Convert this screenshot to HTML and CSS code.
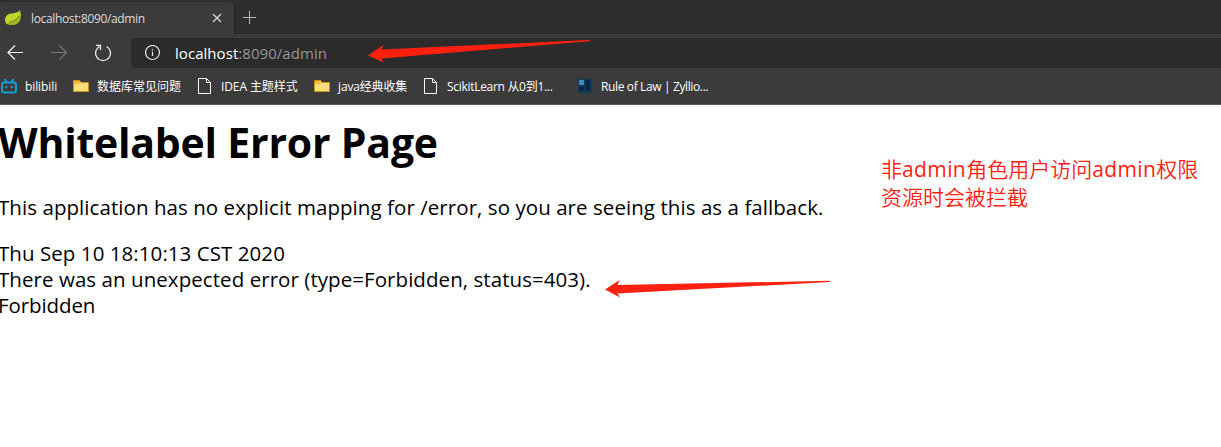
FILE: index.html
```html
<!DOCTYPE html>
<html lang="zh-CN">
<head>
<meta charset="utf-8">
<title>localhost:8090/admin</title>
<link rel="stylesheet" href="styles.css">
</head>
<body>
<header class="browser">
  <div class="tabstrip">
    <div class="tab">
      <svg class="leaf" width="18" height="18" viewBox="0 0 18 18"><path d="M15.800 1.200C17.200 5 17.400 10 14.800 13c-2.600 3-7.300 3.400-11.300 1.800C.2 13.500.4 8.300 3.200 6c3-2.400 9.800-1 12.600-4.800z" fill="#c3d62e"/><path d="M1.300 14c6 .3 11.500-2.300 14.800-8 .2 3-.2 5.800-2 7.700-3 3-7.600 2.800-11 1.600z" fill="#9fba1a"/><path d="M5 13.300c4.500-.8 8-2.800 10.500-6.600" fill="none" stroke="#4d6b18" stroke-width=".8"/></svg>
      <span class="tab-title">localhost:8090/admin</span>
      <svg class="close" width="10" height="10" viewBox="0 0 10 10"><path d="M1 1l8 8M9 1L1 9" stroke="#d8d8d8" stroke-width="1.300"/></svg>
    </div>
    <svg class="plus" width="14" height="14" viewBox="0 0 14 14"><path d="M7.500 1v13M1 7.500h13" stroke="#b4b4b4"/></svg>
  </div>
  <div class="toolbar">
    <svg width="18" height="18" viewBox="0 0 18 18" fill="none" stroke="#f2f2f2" stroke-width="1.200"><path d="M17 8.500H2.300M9 1.500L2 8.500l7 7"/></svg>
    <svg width="18" height="18" viewBox="0 0 18 18" fill="none" stroke="#777" stroke-width="1.200"><path d="M1 8.500h15.200M9.500 1.500l7 7-7 7"/></svg>
    <svg width="18" height="18" viewBox="0 0 18 18" fill="none" stroke="#f2f2f2" stroke-width="1.300"><path d="M12.600 2.500A7.500 7.500 0 1 1 5.500 2.500M2 1.400h4.500v4.700"/></svg>
    <div class="omnibox">
      <svg width="16" height="16" viewBox="0 0 16 16"><circle cx="7.500" cy="7.500" r="7" fill="none" stroke="#e8e8e8" stroke-width="1.200"/><path d="M7.500 6.500V11M7.500 4v1.300" stroke="#e8e8e8" stroke-width="1.200"/></svg>
      <span class="url"><b>localhost</b>:8090/admin</span>
    </div>
  </div>
  <nav class="bookmarks">
    <a class="bm bm-bili"><svg width="17" height="16" viewBox="0 0 17 16" fill="none" stroke="#119fd6" stroke-width="2"><rect x="2" y="4.500" width="14" height="10" rx="2.200"/><path d="M4.500 1l2 2.800M13.500 1l-2 2.800M6.200 8v2.300M11.800 8v2.300"/></svg><span>bilibili</span></a>
    <a class="bm bm-db"><svg width="16" height="12" viewBox="0 0 16 12"><path d="M.5.5h6l1.500 2h7.500v9H.5z" fill="#ffdc7c" stroke="#c79512"/><path d="M1 1h5.500l.5 1.500L6 4H1z" fill="#f5bd2e"/></svg><span>数据库常见问题</span></a>
    <a class="bm bm-idea"><svg width="13" height="16" viewBox="0 0 13 16" fill="none" stroke="#f4f4f4"><path d="M.5.5h8l4 4v11H.5zM8.500.5v4h4"/></svg><span>IDEA 主题样式</span></a>
    <a class="bm bm-java"><svg width="16" height="12" viewBox="0 0 16 12"><path d="M.5.5h6l1.500 2h7.500v9H.5z" fill="#ffdc7c" stroke="#c79512"/><path d="M1 1h5.500l.5 1.500L6 4H1z" fill="#f5bd2e"/></svg><span>java经典收集</span></a>
    <a class="bm bm-sci"><svg width="13" height="16" viewBox="0 0 13 16" fill="none" stroke="#f4f4f4"><path d="M.5.5h8l4 4v11H.5zM8.500.5v4h4"/></svg><span>ScikitLearn 从0到1...</span></a>
    <a class="bm bm-law"><svg width="16" height="16" viewBox="0 0 16 16"><rect x=".5" y=".5" width="15" height="15" rx="2" fill="#1d3a4c" stroke="#27404e"/><path d="M2 2h5v5H2z" fill="#3592b8"/><path d="M8.500 2H13v11H8.500zM2 8.500h5V13H2z" fill="#02294f"/></svg><span>Rule of Law | Zyllio...</span></a>
  </nav>
</header>
<main class="page">
  <h1>Whitelabel Error Page</h1>
  <p class="intro">This application has no explicit mapping for /error, so you are seeing this as a fallback.</p>
  <div class="date">Thu Sep 10 18:10:13 CST 2020</div>
  <div class="reason">There was an unexpected error (type=Forbidden, status=403).</div>
  <div class="message">Forbidden</div>
</main>
<svg class="arrow arrow-url" width="224" height="26" viewBox="0 0 224 26"><path d="M0 17.500L15.500 7l-2 4.500L221 2l1.500.5-1.500.8L13.500 20.500l2 4z" fill="#ff2010"/></svg>
<svg class="arrow arrow-status" width="227" height="20" viewBox="0 0 227 20"><path d="M0 10.500L14.500 1l-2 5L225 1.800V3L12.500 14.500l2.500 4z" fill="#ff2010"/></svg>
<div class="note"><div>非<span>admin</span>角色用户访问<span>admin</span>权限</div><div>资源时会被拦截</div></div>
</body>
</html>
```
FILE: styles.css
```css
body { margin: 0; width: 1221px; height: 447px; overflow: hidden; background: #fff; color: #000; font-family: "Open Sans", "Noto Sans CJK SC", sans-serif; }
svg { display: block; flex: none; }
.browser { height: 105px; box-sizing: border-box; background: #3b3b3b; border-bottom: 1px solid #5c5858; white-space: nowrap; }
.tabstrip { height: 34px; background: #2e2e2e; display: flex; padding-top: 2px; box-sizing: border-box; box-shadow: inset 0 -1px #292929; }
.tab { width: 234px; height: 32px; box-sizing: border-box; background: #3b3b3b; border-radius: 0 4px 0 0; display: flex; align-items: center; padding: 0 12px 0 4px; box-shadow: 1px 0 1px #222; }
.tab-title { font-size: 12px; color: #ddd; margin-left: 9px; flex: 1; letter-spacing: -.35px; }
.plus { margin: 8px 0 0 8px; }
.toolbar { height: 34px; padding-top: 2px; display: flex; align-items: center; padding-left: 6px; gap: 26px; }
.omnibox { flex: 1; height: 30px; background: #2b2b2b; border-radius: 4px 0 0 4px; display: flex; align-items: center; padding-left: 14px; gap: 14px; font-size: 15px; letter-spacing: .05px; color: #969696; }
.toolbar .omnibox { margin-left: -7px; }
.url b { color: #fff; font-weight: 400; }
.bookmarks { height: 32px; display: flex; align-items: center; font-size: 12px; color: #fff; }
.bm { display: flex; align-items: center; box-sizing: border-box; gap: 8px; flex: none; }
.bm-bili { width: 73px; letter-spacing: -.1px; }
.bm-db { width: 125px; }
.bm-idea { width: 116px; gap: 10px; letter-spacing: -.1px; }
.bm-java { width: 110px; letter-spacing: -.15px; }
.bm-sci { width: 153px; gap: 10px; letter-spacing: -.3px; }
.bm-law { letter-spacing: -.37px; }
.page h1 { margin: 0; padding-top: 9px; font-size: 41px; line-height: 56px; font-weight: 700; letter-spacing: -.22px; }
.page { white-space: nowrap; font-size: 20.500px; line-height: 26px; margin-left: -2px; letter-spacing: .06px; }
.intro { margin: 24px 0 20px; }
.message { letter-spacing: -.1px; }
.arrow { position: absolute; }
.arrow-url { left: 368px; top: 38px; }
.arrow-status { left: 605px; top: 279px; }
.note { position: absolute; left: 881px; top: 155px; font-size: 21px; line-height: 28px; color: #ff2010; white-space: nowrap; font-weight: 350; }
.note span { font-weight: 400; letter-spacing: .4px; }
```
